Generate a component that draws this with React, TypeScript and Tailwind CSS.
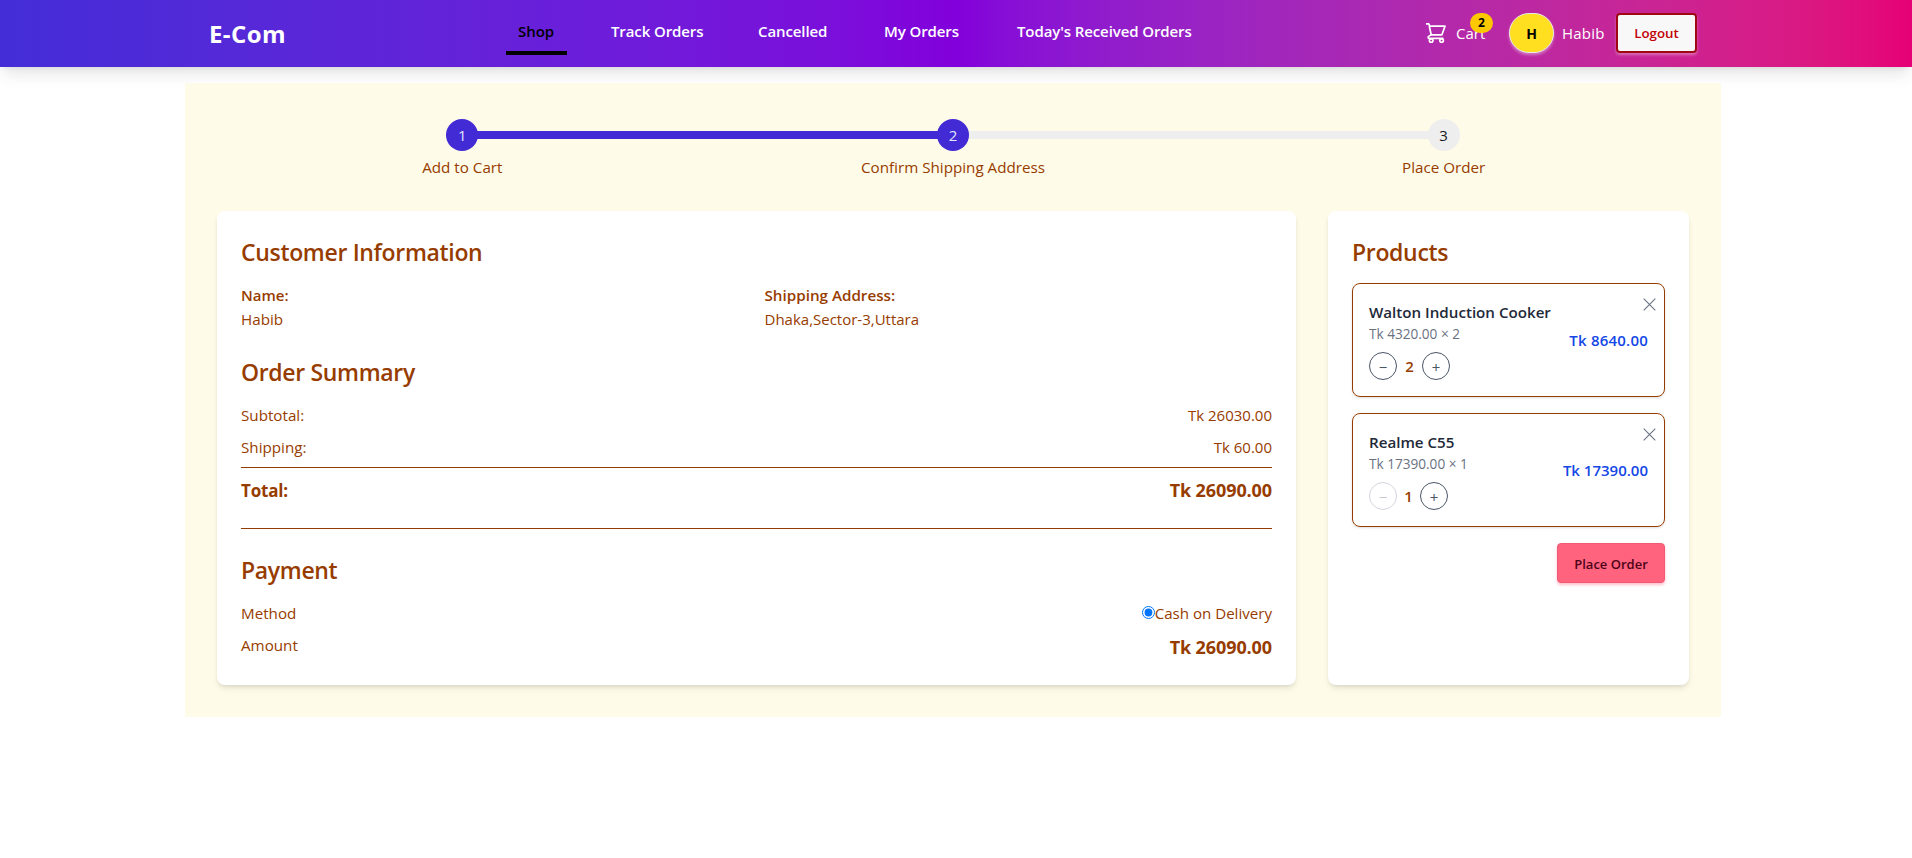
import React from "react";

const navLinks = [
  { label: "Track Orders", width: "w-[147px]" },
  { label: "Cancelled", width: "w-[126px]" },
  { label: "My Orders", width: "w-[133px]" },
  { label: "Today's Received Orders", width: "w-[180px]" },
];

const steps = [
  { label: "Add to Cart", done: true },
  { label: "Confirm Shipping Address", done: true },
  { label: "Place Order", done: false },
];

const products = [
  { name: "Walton Induction Cooker", price: "4320.00", qty: 2, total: "8640.00" },
  { name: "Realme C55", price: "17390.00", qty: 1, total: "17390.00" },
];

function CartIcon() {
  return (
    <svg width="20" height="20" viewBox="0 0 20 20" fill="none" stroke="white" strokeWidth="1.7" strokeLinejoin="round">
      <path d="M0 .9h2.8l.9 2.3h15.3l-3.1 8.6H5.2L3.3 3.2" />
      <path d="M5.4 11.6 2.6 13.4c-.8.7-.5 2 .6 2h14.2" />
      <circle cx="5.2" cy="17.6" r="1.8" />
      <circle cx="15.6" cy="17.6" r="1.8" />
    </svg>
  );
}

function Header() {
  return (
    <header className="flex h-[67px] items-start bg-linear-to-r from-[#432dd7] via-[#8200db] to-[#e60076] pl-[209px] text-white shadow-lg">
      <h1 className="mt-[18px] w-[76px] whitespace-nowrap text-[24px] font-bold leading-8 tracking-[0.4px]">E-Com</h1>
      <nav className="ml-[221px] flex w-[920px] whitespace-nowrap text-[15px] font-semibold leading-6 tracking-[-0.1px]">
        <a className="mr-[44px] h-[55px] w-[61px] border-b-4 border-black pr-px pt-[19px] text-center text-black">Shop</a>
        {navLinks.map((l) => (
          <a key={l.label} className={"shrink-0 pt-[19px] " + l.width}>
            {l.label}
          </a>
        ))}
      </nav>
      <div className="flex whitespace-nowrap">
        <div className="relative mt-[23px] flex w-[83px] gap-[10px]">
          <CartIcon />
          <span className="-mt-[2px] text-[15px] leading-6">Cart</span>
          <span className="absolute left-[44px] -top-[10px] flex h-5 w-[23px] items-center justify-center rounded-full bg-[#fcc800] text-[12px] font-bold text-black">
            2
          </span>
        </div>
        <div className="mt-[13px] flex h-10 w-[45px] items-center justify-center rounded-full border border-[#e8e8e8] bg-[#ffdf20] text-[14px] font-bold text-black shadow-[0_2px_3px_rgba(248,248,248,0.4)]">
          H
        </div>
        <span className="ml-2 mt-[21px] w-[54px] text-[15px] leading-6 tracking-[0.2px]">Habib</span>
        <button className="mt-[13px] h-10 w-[81px] rounded border-2 border-[#9f0712] bg-[#f8f8f8] pt-0.5 text-[13.3px] font-semibold text-[#c10007] shadow-[0_2px_3px_rgba(248,248,248,0.35)]">
          Logout
        </button>
      </div>
    </header>
  );
}

function Steps() {
  return (
    <ol className="grid grid-cols-3">
      {steps.map((s, i) => (
        <li key={s.label} className="flex flex-col items-center">
          <div className="flex w-full items-center">
            <div className={i === 0 ? "-mr-1 h-2 flex-1" : s.done ? "-mr-1 h-2 flex-1 bg-[#422ad5]" : "-mr-1 h-2 flex-1 bg-[#eeeeee]"} />
            <div
              className={
                s.done
                  ? "z-10 flex size-8 items-center justify-center rounded-full bg-[#422ad5] text-[#e0e7ff]"
                  : "z-10 flex size-8 items-center justify-center rounded-full bg-[#eeeeee] text-[#18181b]"
              }
            >
              {i + 1}
            </div>
            <div className={i === 2 ? "-ml-1 h-2 flex-1" : i === 0 ? "-ml-1 h-2 flex-1 bg-[#422ad5]" : "-ml-1 h-2 flex-1 bg-[#eeeeee]"} />
          </div>
          <span className="mt-1 text-[15.2px] leading-6">{s.label}</span>
        </li>
      ))}
    </ol>
  );
}

function Heading({ children }: { children: React.ReactNode }) {
  return <h2 className="-mb-0.5 text-[23px] font-semibold leading-[34px] tracking-[-0.33px]">{children}</h2>;
}

function QtyButton({ sign, disabled }: { sign: string; disabled?: boolean }) {
  return (
    <button
      className={
        disabled
          ? "flex size-7 items-center justify-center rounded-full border border-[#d1d5dc] pt-0.5 text-[15px] text-[#c4c8cf]"
          : "flex size-7 items-center justify-center rounded-full border border-[#4a5565] pt-0.5 text-[15px] text-[#4a5565]"
      }
    >
      {sign}
    </button>
  );
}

export default function App() {
  return (
    <div className="min-h-[858px] bg-white font-['Open_Sans','Noto_Sans',sans-serif] text-[15px] text-[#973c00]">
      <Header />
      <main className="ml-[185px] mt-4 h-[634px] w-[1536px] bg-[#fefbe8] px-8 pt-9">
        <Steps />
        <div className="mt-8 grid h-[474px] grid-cols-[1079px_361px] gap-8">
          <section className="rounded-lg bg-white p-6 shadow-md">
            <Heading>Customer Information</Heading>
            <div className="mt-4 grid grid-cols-2 gap-4 leading-6">
              <div>
                <p className="font-semibold">Name:</p>
                <p className="text-[15.2px]">Habib</p>
              </div>
              <div>
                <p className="text-[15.2px] font-semibold">Shipping Address:</p>
                <p>Dhaka,Sector-3,Uttara</p>
              </div>
            </div>
            <div className="mt-6">
              <Heading>Order Summary</Heading>
            </div>
            <div className="mt-4 flex justify-between leading-6">
              <span className="text-[15.2px]">Subtotal:</span>
              <span>Tk 26030.00</span>
            </div>
            <div className="mt-2 flex justify-between leading-6">
              <span className="text-[15.2px]">Shipping:</span>
              <span>Tk 60.00</span>
            </div>
            <div className="mt-2 flex h-[37px] items-baseline justify-between border-t border-[#973c00] pt-2 text-[18px] font-bold leading-7">
              <span className="text-[17px] tracking-[-0.2px]">Total:</span>
              <span className="tracking-[-0.1px]">Tk 26090.00</span>
            </div>
            <hr className="mt-6 border-[#973c00]" />
            <div className="mt-6">
              <Heading>Payment</Heading>
            </div>
            <div className="mt-4 flex justify-between leading-6">
              <span className="text-[15.2px]">Method</span>
              <label className="flex">
                <input type="radio" defaultChecked className="mt-[5px] size-[13px]" />
                <span className="text-[15.1px]">Cash on Delivery</span>
              </label>
            </div>
            <div className="mt-2 flex justify-between leading-6">
              <span className="text-[15.2px]">Amount</span>
              <span className="text-[18px] font-bold leading-7 tracking-[-0.1px]">Tk 26090.00</span>
            </div>
          </section>

          <section className="rounded-lg bg-white p-6 shadow-md">
            <Heading>Products</Heading>
            <div className="mt-4 flex flex-col gap-4">
              {products.map((p) => (
                <article
                  key={p.name}
                  className="relative flex h-[114px] items-center justify-between rounded-lg border border-[#973c00] px-4 shadow-sm"
                >
                  <div>
                    <h3 className="text-[15.15px] font-semibold leading-6 text-[#1e2939]">{p.name}</h3>
                    <p className="text-[13.6px] leading-5 text-[#6a7282]">
                      Tk {p.price} × {p.qty}
                    </p>
                    <div className="mt-2 flex items-center gap-2">
                      <QtyButton sign="−" disabled={p.qty === 1} />
                      <span className={p.qty === 1 ? "flex w-[7px] justify-center font-semibold" : "flex w-[9px] justify-center font-semibold"}>
                        {p.qty}
                      </span>
                      <QtyButton sign="+" />
                    </div>
                  </div>
                  <span className={p.qty === 1 ? "font-semibold text-[#1447e6]" : "text-[15px] font-semibold tracking-[0.22px] text-[#1447e6]"}>
                    Tk {p.total}
                  </span>
                  <svg className="absolute right-2 top-[14px]" width="13" height="13" viewBox="0 0 13 13" stroke="#6a7282" strokeWidth="1.1">
                    <path d="M.7.7l11.6 11.6M12.3.7.7 12.3" />
                  </svg>
                </article>
              ))}
            </div>
            <div className="mt-4 flex justify-end">
              <button className="h-10 w-[108px] rounded border border-[#f05a76] bg-[#ff637e] pt-[3px] text-[13px] font-semibold text-[#4d0218] shadow-[0_2px_3px_rgba(255,99,126,0.4)]">
                Place Order
              </button>
            </div>
          </section>
        </div>
      </main>
    </div>
  );
}
